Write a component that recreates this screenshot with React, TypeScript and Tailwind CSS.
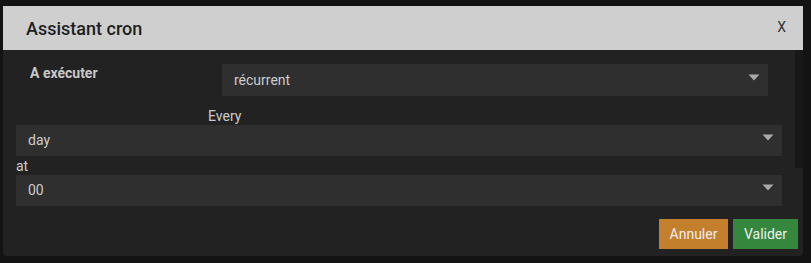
function Caret() {
  return (
    <svg width="12" height="7" viewBox="0 0 12 7" className="shrink-0">
      <path d="M0.5 0.5 H11.5 L6 6.5 Z" fill="#a9a9a9" />
    </svg>
  );
}

function FakeSelect({ value, className }: { value: string; className: string }) {
  return (
    <div className={`bg-[#2f2f2f] flex items-center justify-between pl-[12px] pr-[8px] text-[14px] text-[#cccccc] ${className}`}>
      <span>{value}</span>
      <span className="-mt-[6px]">
        <Caret />
      </span>
    </div>
  );
}

export default function App() {
  return (
    <div className="w-[811px] h-[263px] bg-[#131313] overflow-hidden font-['Roboto',sans-serif] pt-[6px] pl-[3px]">
      <div className="w-[800px] flex flex-col">
        {/* Header */}
        <div className="h-[44px] bg-[#cfcfcf] flex items-center justify-between pl-[23px] pr-[17px]">
          <h1 className="text-[18px] font-medium text-[#1e1e1e]">Assistant cron</h1>
          <button className="text-[14px] text-[#333] leading-none -mt-[3px]">X</button>
        </div>

        {/* Body */}
        <div className="relative h-[206px] bg-[#222222] rounded-b-[4px] flex flex-col">
          <div className="absolute right-0 top-0 w-[8px] h-[118px] bg-[#181818]" />

          <div className="mt-[14px] flex items-start">
            <div className="w-[219px] pl-[27px] text-[14px] font-bold leading-[18px] text-[#c8c8c8]">A exécuter</div>
            <FakeSelect value="récurrent" className="w-[546px] h-[32px] pl-[11px] pr-[7px]" />
          </div>

          <div className="mt-[11px] pl-[205px] h-[18px] leading-[18px] text-[14px] text-[#cccccc]">Every</div>
          <FakeSelect value="day" className="mx-[13px] w-[766px] h-[31px]" />

          <div className="mt-[1px] pl-[13px] h-[18px] leading-[19px] text-[14px] text-[#cccccc]">at</div>
          <FakeSelect value="00" className="mx-[13px] w-[766px] h-[31px]" />

          <div className="mt-[13px] flex justify-end gap-[5px] pr-[5px]">
            <button className="w-[69px] h-[30px] bg-[#c47f2c] text-[14px] text-[#eeeeee]">Annuler</button>
            <button className="w-[65px] h-[30px] bg-[#35873e] text-[14px] text-[#eeeeee]">Valider</button>
          </div>
        </div>
      </div>
    </div>
  );
}
